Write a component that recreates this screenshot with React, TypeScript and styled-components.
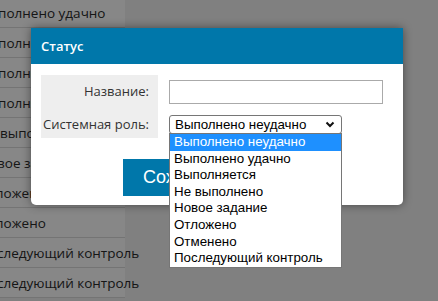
import React from 'react'
import styled, { createGlobalStyle } from 'styled-components';

const GlobalStyle = createGlobalStyle`
    body {
        margin: 0;
        background-color: #f2f2f2;
        overflow: hidden;
    }
`;

const bgRows = [
    'Выполнено удачно',
    'Выполнено неудачно',
    'Выполнено неудачно',
    'Выполняется',
    'Не выполнено',
    'Новое задание',
    'Отложено',
    'Отложено',
    'Последующий контроль',
    'Последующий контроль',
];

const options = [
    'Выполнено неудачно',
    'Выполнено удачно',
    'Выполняется',
    'Не выполнено',
    'Новое задание',
    'Отложено',
    'Отменено',
    'Последующий контроль',
];

const App: React.FC = () => {
    return (
        <Page>
            <GlobalStyle />
            <BgTable>
                {bgRows.map((text, i) => (
                    <BgRow key={i}>{text}</BgRow>
                ))}
            </BgTable>
            <Overlay />
            <Modal>
                <ModalHeader>Статус</ModalHeader>
                <ModalBody>
                    <FormGrid>
                        <LabelCell>Название:</LabelCell>
                        <FieldCell $offset={5}>
                            <TextInput />
                        </FieldCell>
                        <LabelCell $offset={3}>Системная роль:</LabelCell>
                        <FieldCell $offset={9}>
                            <SelectWrap>
                                <SelectBox>
                                    <span>Выполнено неудачно</span>
                                    <svg width="10" height="7" viewBox="0 0 10 7">
                                        <polyline points="1.5,1.5 5,5 8.5,1.5" fill="none" stroke="#111" strokeWidth="2" />
                                    </svg>
                                </SelectBox>
                                <OptionList>
                                    {options.map((opt, i) => (
                                        <OptionItem key={opt} $active={i === 0}>{opt}</OptionItem>
                                    ))}
                                </OptionList>
                            </SelectWrap>
                        </FieldCell>
                    </FormGrid>
                    <ButtonRow>
                        <SaveButton>Сохранить</SaveButton>
                    </ButtonRow>
                </ModalBody>
            </Modal>
        </Page>
    )
};

const Page = styled.div`
    position: relative;
    width: 438px;
    height: 301px;
    overflow: hidden;
    font-family: "Open Sans", "Noto Sans", sans-serif;
`;

const BgTable = styled.div`
    width: 146px;
    margin-left: -21px;
    margin-top: -2px;
    display: flex;
    flex-direction: column;
`;

const BgRow = styled.div`
    height: 29px;
    border-bottom: 1px solid #dcdcdc;
    background-color: #ffffff;
    display: flex;
    align-items: center;
    font-size: 13.5px;
    color: #2a2a2a;
    white-space: nowrap;
`;

const Overlay = styled.div`
    position: absolute;
    inset: 0;
    background-color: rgba(0, 0, 0, 0.47);
`;

const Modal = styled.div`
    position: absolute;
    left: 31px;
    top: 28px;
    width: 372px;
    background-color: #ffffff;
    border-radius: 0 0 5px 5px;
    box-shadow: 0 0 10px rgba(0, 0, 0, 0.45);
`;

const ModalHeader = styled.div`
    height: 36px;
    background-color: #0077aa;
    color: #ffffff;
    font-size: 13px;
    font-weight: 600;
    display: flex;
    align-items: center;
    padding-left: 10px;
`;

const ModalBody = styled.div`
    padding: 11px 10px 9px;
`;

const FormGrid = styled.div`
    display: grid;
    grid-template-columns: 117px auto;
    grid-template-rows: 31px 32px;
`;

const LabelCell = styled.div<{ $offset?: number }>`
    background-color: #eeeeee;
    color: #333333;
    font-size: 13px;
    display: flex;
    align-items: center;
    justify-content: flex-end;
    padding-right: 9px;
    padding-top: ${p => p.$offset || 0}px;
    box-sizing: border-box;
`;

const FieldCell = styled.div<{ $offset?: number }>`
    padding-left: 11px;
    padding-top: ${p => p.$offset || 0}px;
    display: flex;
    align-items: flex-start;
`;

const TextInput = styled.input`
    width: 214px;
    height: 24px;
    box-sizing: border-box;
    border: 1px solid #aaaaaa;
    outline: none;
`;

const SelectWrap = styled.div`
    position: relative;
`;

const SelectBox = styled.div`
    width: 173px;
    height: 19px;
    box-sizing: border-box;
    border: 1px solid #767676;
    border-radius: 3px;
    background-color: #ffffff;
    display: flex;
    align-items: center;
    justify-content: space-between;
    padding: 0 6px 0 5px;
    font-family: "Liberation Sans", Arial, sans-serif;
    font-size: 13.33px;
    color: #000000;
`;

const OptionList = styled.div`
    position: absolute;
    left: 0;
    top: 18px;
    width: 173px;
    box-sizing: border-box;
    border: 1px solid #767676;
    background-color: #ffffff;
    z-index: 2;
`;

const OptionItem = styled.div<{ $active?: boolean }>`
    height: 16.6px;
    line-height: 16.6px;
    padding-left: 4px;
    font-family: "Liberation Sans", Arial, sans-serif;
    font-size: 13.33px;
    white-space: nowrap;
    color: ${p => (p.$active ? '#ffffff' : '#000000')};
    background-color: ${p => (p.$active ? '#1e90ff' : 'transparent')};
`;

const ButtonRow = styled.div`
    margin-top: 21px;
    padding-left: 82px;
    display: flex;
`;

const SaveButton = styled.button`
    height: 37px;
    padding: 0 20px;
    border: none;
    background-color: #0077aa;
    color: #ffffff;
    font-family: "Liberation Sans", Arial, sans-serif;
    font-size: 18px;
`;

export default App;
